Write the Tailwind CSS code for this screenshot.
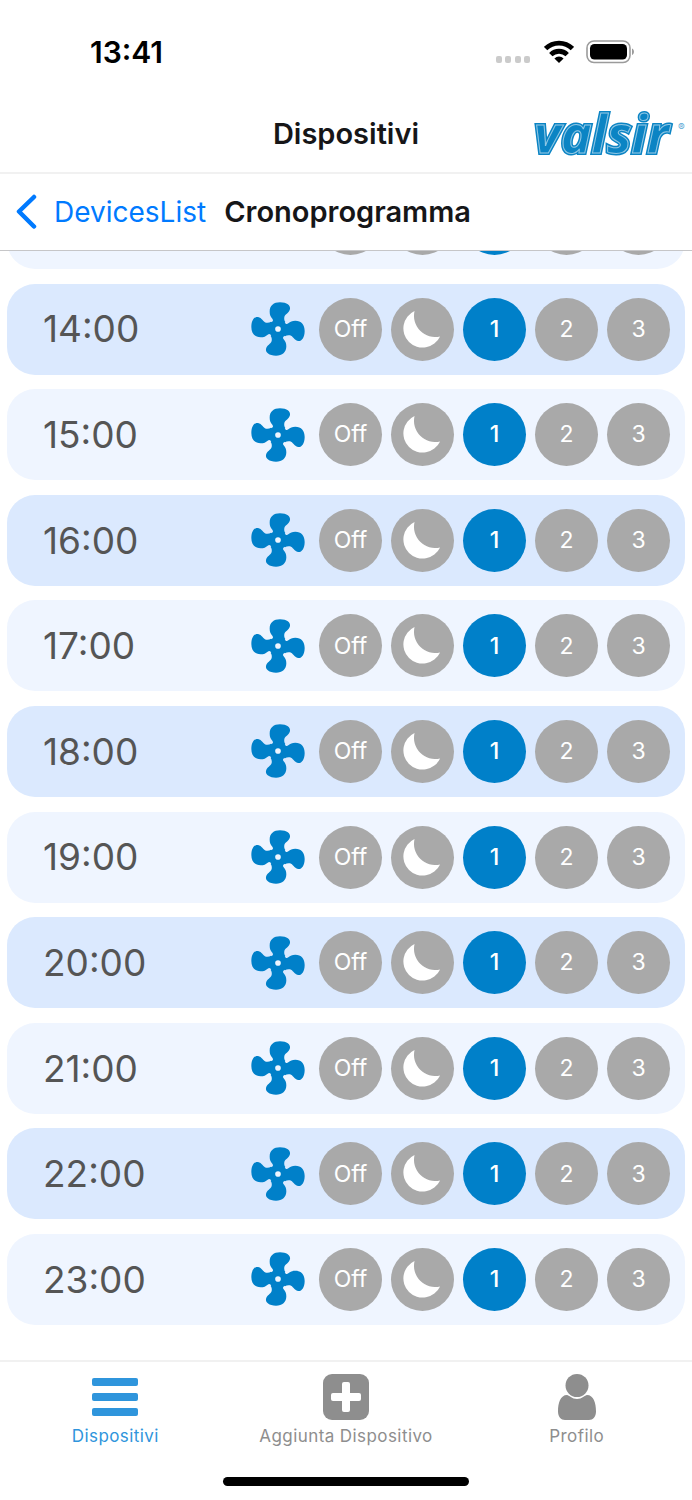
<!DOCTYPE html>
<html lang="it">
<head>
  <meta charset="UTF-8" />
  <meta name="viewport" content="width=device-width, initial-scale=1.0" />
  <title>Cronoprogramma</title>
  <script src="https://cdn.jsdelivr.net/npm/@tailwindcss/browser@4"></script>
</head>
<body class="bg-white h-screen flex flex-col overflow-hidden font-['Inter',sans-serif] text-[#161618]">
  <!-- status bar -->
  <div class="h-24 shrink-0 flex items-center justify-between pl-[90px] pr-[57px] pt-2 text-black">
    <span class="text-[30px] font-semibold">13:41</span>
    <div class="flex items-center gap-3">
      <svg class="w-9 h-6" viewBox="0 0 36 24" fill="#cbcbcb">
        <rect x="0" y="16" width="6" height="7" rx="2" />
        <rect x="9" y="16" width="6" height="7" rx="2" />
        <rect x="19" y="16" width="6" height="7" rx="2" />
        <rect x="28" y="16" width="6" height="7" rx="2" />
      </svg>
      <svg class="w-[30px] h-6" viewBox="0 0 30 24" fill="none" stroke="#000" stroke-width="4.800">
        <path d="M1.600 8.600a19.200 19.200 0 0 1 26.800 0" />
        <path d="M6.800 14.600a11.700 11.700 0 0 1 16.400 0" />
        <path d="M15 23l-4.600-4.600a6.400 6.400 0 0 1 9.200 0z" fill="#000" stroke="none" />
      </svg>
      <svg class="w-[49px] h-6" viewBox="0 0 49 24">
        <rect x="1" y="1" width="43" height="21.500" rx="7" fill="none" stroke="#9b9b9b" stroke-width="1.600" />
        <rect x="4" y="4" width="37" height="15.500" rx="4.500" />
        <path d="M46 8.500c2.600 1 2.600 5.500 0 6.500z" fill="#9b9b9b" />
      </svg>
    </div>
  </div>

  <!-- header -->
  <header class="h-[78px] shrink-0 grid grid-cols-3 items-center border-b-2 border-[#f1f1f1]">
    <h1 class="col-start-2 text-[29px] leading-9 font-semibold text-center">Dispositivi</h1>
    <svg class="w-[156px] h-[52px] justify-self-end mr-1" viewBox="0 0 156 52" role="img" aria-label="valsir">
      <!-- blue outer edge, then the lettering with its white inline -->
      <use href="#marchio" stroke="#0b84c4" stroke-width="4" />
      <text id="marchio" x="2" y="45" class="font-['Open_Sans',sans-serif] font-bold italic text-[52px]" fill="#0b84c4">valsir</text>
      <use href="#marchio" stroke="#fff" stroke-width="1" stroke-opacity="0.550" />
      <text x="146" y="23" fill="#5aa9d6" class="font-['Inter',sans-serif] text-[10px]">®</text>
    </svg>
  </header>

  <nav class="h-[77px] shrink-0 flex items-center pl-4 text-[28px] leading-9 border-b border-[#c6c6c8]">
    <a href="#" class="flex items-center gap-4 text-[#007aff]">
      <svg class="w-[22px] h-9" viewBox="0 0 22 36" fill="none" stroke="currentColor" stroke-width="4.500" stroke-linecap="round" stroke-linejoin="round">
        <path d="M18 3L3 17.500l15 15" />
      </svg>
      DevicesList
    </a>
    <h2 class="ml-[18px] text-[29px] font-semibold">Cronoprogramma</h2>
  </nav>

  <!-- hourly schedule -->
  <main class="flex-1 min-h-0 overflow-hidden flex flex-col px-[7px] pb-[35px]">
    <ul id="orari" class="flex-1 -mt-[73px] flex flex-col justify-between"></ul>
  </main>

  <!-- tab bar -->
  <footer class="h-[140px] shrink-0 flex flex-col items-center border-t-2 border-[#f1f1f1]">
    <div class="w-full grid grid-cols-3 pt-3 text-[17px] leading-6 tracking-wide text-[#8e8e8e]">
      <a href="#" class="flex flex-col items-center gap-1 text-[#2f95dc]">
        <svg class="w-[46px] h-[46px]" viewBox="0 0 46 46" fill="currentColor">
          <rect y="4" width="46" height="8" rx="2" />
          <rect y="19" width="46" height="8" rx="2" />
          <rect y="34" width="46" height="8" rx="2" />
        </svg>
        Dispositivi
      </a>
      <a href="#" class="flex flex-col items-center gap-1">
        <svg class="w-[46px] h-[46px]" viewBox="0 0 46 46" fill="currentColor">
          <rect width="46" height="46" rx="9" />
          <rect x="8" y="19" width="30" height="8" rx="2" fill="#fff" />
          <rect x="19" y="8" width="8" height="30" rx="2" fill="#fff" />
        </svg>
        Aggiunta Dispositivo
      </a>
      <a href="#" class="flex flex-col items-center gap-1">
        <svg class="w-[46px] h-[46px]" viewBox="0 0 46 46" fill="currentColor">
          <path d="M13 21C6.500 21 4 29 4 37.500c0 5 3 8.500 7 8.500h24c4 0 7-3.500 7-8.500 0-8.500-2.500-16.500-9-16.500-2 0-5 4-10 4s-8-4-10-4z" />
          <circle cx="23" cy="11.500" r="12.500" fill="#fff" />
          <circle cx="23" cy="11.500" r="11.500" />
        </svg>
        Profilo
      </a>
    </div>
    <div class="w-[246px] h-[9px] mt-[29px] rounded-full bg-black"></div>
  </footer>

  <svg class="hidden">
    <symbol id="ventola" viewBox="-81 -81 162 162">
      <g fill="#0080c9">
        <path id="pala" d="M-22-20C-15-22-13-26-17-31C-22-37-25-42-25-52C-25-70-13-80 6-80C27-80 38-70 36-60C34-48 21-45 19-36C18-30 19-25 22-21L0 0z" />
        <use href="#pala" transform="rotate(90)" />
        <use href="#pala" transform="rotate(180)" />
        <use href="#pala" transform="rotate(270)" />
        <circle r="26" />
      </g>
      <circle r="8.500" fill="#eef5ff" />
    </symbol>
    <symbol id="luna" viewBox="0 0 190 190">
      <path d="M71 39A58 58 0 1 0 148 116A64 64 0 0 1 71 39z" fill="#fff" />
    </symbol>
  </svg>

  <script>
    const lista = document.getElementById("orari");
    const grigio = "size-[63px] rounded-full bg-[#a9a9a9] flex items-center justify-center";
    const attivo = "size-[63px] rounded-full bg-[#0080c9] flex items-center justify-center";

    for (let ora = 13; ora <= 23; ora++) {
      const sfondo = ora % 2 === 0 ? "bg-[#dbe9fe]" : "bg-[#eff5ff]";
      lista.innerHTML += `
        <li class="${sfondo} h-[91px] shrink-0 rounded-[28px] flex items-center justify-between pl-9 pr-[15px]">
          <span class="text-[37px] text-[#555]">${ora}:00</span>
          <div class="flex items-center gap-[9px] text-[23px] text-white">
            <svg class="size-[54px] mr-[5px]"><use href="#ventola" /></svg>
            <button type="button" class="${grigio}">Off</button>
            <button type="button" class="${grigio}" aria-label="Notte"><svg class="size-[63px]"><use href="#luna" /></svg></button>
            <button type="button" class="${attivo} font-medium" aria-pressed="true">1</button>
            <button type="button" class="${grigio}">2</button>
            <button type="button" class="${grigio}">3</button>
          </div>
        </li>`;
    }
  </script>
</body>
</html>
